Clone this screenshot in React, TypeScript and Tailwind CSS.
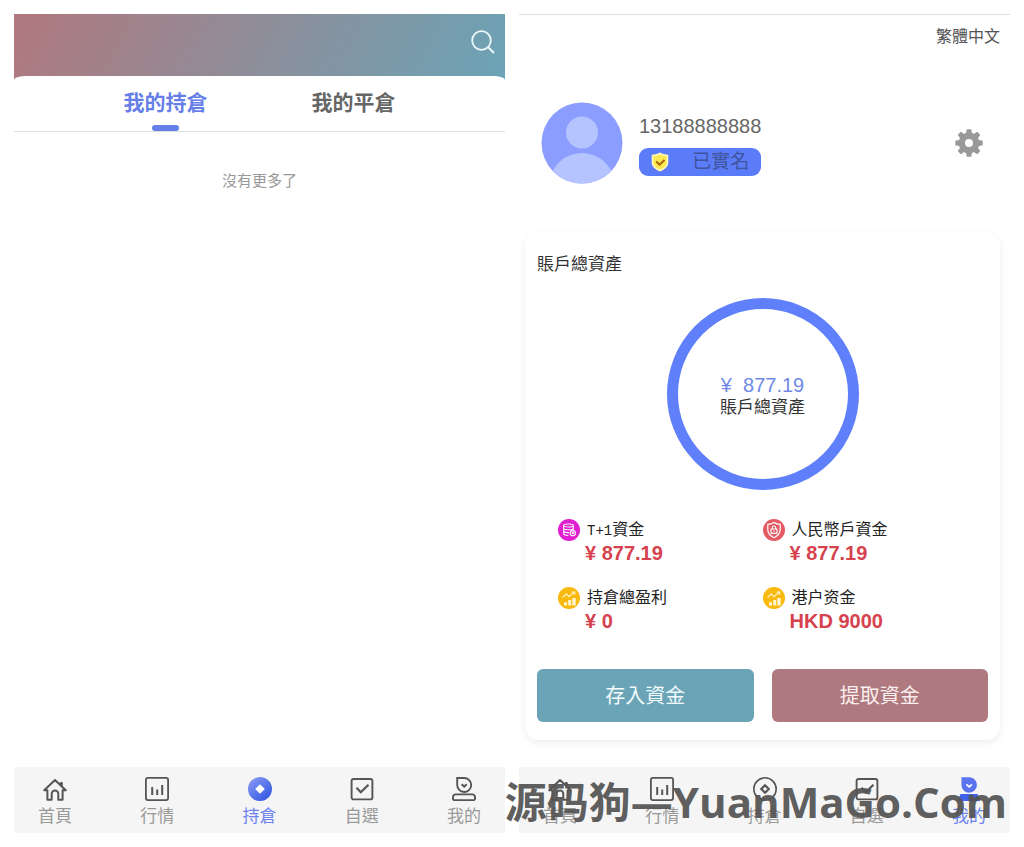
import React from "react";

type IconProps = { active?: boolean };

const INK = "#555";

function HomeIcon(_: IconProps) {
  return (
    <svg viewBox="0 0 24 24" className="size-6" fill="none" stroke={INK} strokeWidth="2" strokeLinejoin="round" strokeLinecap="round" aria-hidden="true">
      <path d="M1.200 13.200 12 3l10.800 10.200h-3.200v9.600h-4.300v-6.100a3.300 3.300 0 0 0-6.600 0v6.100H4.400v-9.600z" />
      <path d="M18.300 8V6.200" strokeWidth="3" />
    </svg>
  );
}

function ChartIcon(_: IconProps) {
  return (
    <svg viewBox="0 0 24 24" className="size-6" fill="none" stroke={INK} strokeWidth="1.800" aria-hidden="true">
      <rect x="0.900" y="0.900" width="22.200" height="22.200" rx="2" />
      <path d="M7.200 10v8M12.200 12.500V18M17.200 8v10" strokeWidth="2" />
    </svg>
  );
}

function HoldIcon({ active }: IconProps) {
  if (active) {
    return (
      <svg viewBox="0 0 24 24" className="size-6" aria-hidden="true">
        <defs>
          <linearGradient id="coin" x1="0.1" y1="0.2" x2="0.8" y2="1">
            <stop offset="0" stopColor="#7f92f5" />
            <stop offset="1" stopColor="#3358e0" />
          </linearGradient>
        </defs>
        <circle cx="12" cy="12" r="12" fill="url(#coin)" />
        <path d="m12 8.200 3.900 3.800-3.900 3.800L8.100 12z" fill="#fff" stroke="#fff" strokeWidth="1.400" strokeLinejoin="round" />
      </svg>
    );
  }
  return (
    <svg viewBox="0 0 24 24" className="size-6" fill="none" stroke={INK} aria-hidden="true">
      <circle cx="12" cy="12" r="11.200" strokeWidth="1.600" />
      <path d="m12 8.200 3.800 3.800-3.800 3.800L8.200 12z" strokeWidth="2.200" strokeLinejoin="round" />
    </svg>
  );
}

function PickIcon(_: IconProps) {
  return (
    <svg viewBox="0 0 24 24" className="size-6" fill="none" stroke={INK} aria-hidden="true">
      <rect x="1.600" y="2" width="20.800" height="20.400" rx="2" strokeWidth="1.900" />
      <path d="m6.500 10.800 4.300 4.400 7.700-7.400" strokeWidth="2.200" />
    </svg>
  );
}

function MeIcon({ active }: IconProps) {
  const head = "M5.200 1h7.400a7 7 0 1 1-7.400 7z";
  if (active) {
    return (
      <svg viewBox="0 0 24 24" className="size-6" aria-hidden="true">
        <path d={head} fill="#5a73ee" stroke="#5a73ee" strokeWidth="1.500" />
        <path d="m9.400 7.300 2.800 2.500L15 7.300" fill="none" stroke="#fff" strokeWidth="1.700" />
        <path d="M3.500 17h17l3 7H.500z" fill="#3f62e6" />
      </svg>
    );
  }
  return (
    <svg viewBox="0 0 24 24" className="size-6" fill="none" stroke={INK} strokeWidth="1.900" aria-hidden="true">
      <path d={head} />
      <path d="m9.600 7.300 2.600 2.300 2.600-2.300" strokeWidth="2" />
      <path d="M3.500 17.400h17q2.300 0 2.600 3.200.1 2.500-1.700 2.500H2.600q-1.800 0-1.700-2.500.3-3.200 2.600-3.200z" />
    </svg>
  );
}

const NAV = [
  { label: "首頁", Icon: HomeIcon },
  { label: "行情", Icon: ChartIcon },
  { label: "持倉", Icon: HoldIcon },
  { label: "自選", Icon: PickIcon },
  { label: "我的", Icon: MeIcon },
];

function BottomNav({ current }: { current: string }) {
  return (
    <nav className="flex justify-between bg-[#f5f5f5] px-6 pt-2.5 pb-1">
      {NAV.map(({ label, Icon }) => (
        <a
          key={label}
          href="#"
          aria-current={label === current ? "page" : undefined}
          className={`flex flex-col items-center gap-1 text-[17px] leading-6 ${label === current ? "text-[#6b82ef]" : "text-[#999]"}`}
        >
          <Icon active={label === current} />
          {label}
        </a>
      ))}
    </nav>
  );
}

function PositionsScreen() {
  return (
    <section className="flex min-w-0 flex-1 flex-col">
      <header className="bg-linear-[118deg,#ae7a80_4%,#6aa4b7_96%]">
        <div className="flex h-[62px] items-center justify-end px-2.5">
          <button type="button" aria-label="搜尋" className="-mt-1.5">
            <svg viewBox="0 0 24 24" className="size-6" fill="none" stroke="#eef8fb" strokeWidth="1.800" aria-hidden="true">
              <circle cx="10.500" cy="10.500" r="9.300" />
              <path d="m17 17 6 6" strokeWidth="2" />
            </svg>
          </button>
        </div>
        <div role="tablist" className="flex justify-center rounded-t-[12px_4px] border-b border-[#dcdfe1] bg-white">
          <button type="button" role="tab" aria-selected="true" className="flex w-[188px] flex-col items-center gap-[7px] pt-3 text-[21px] leading-[30px] font-bold text-[#667fe8]">
            我的持倉
            <span className="h-1.5 w-[27px] rounded-[3px] bg-[#667fe8]" />
          </button>
          <button type="button" role="tab" aria-selected="false" className="w-[188px] pt-3 pb-[13px] text-[21px] leading-[30px] font-bold text-[#666]">
            我的平倉
          </button>
        </div>
      </header>
      <p className="flex-1 pt-[37px] text-center text-[15px] leading-6 text-[#999]">沒有更多了</p>
      <BottomNav current="持倉" />
    </section>
  );
}

function FundsIcon() {
  return (
    <svg viewBox="0 0 22 22" className="size-[22px]" fill="none" stroke="#fff" strokeWidth="1.100" aria-hidden="true">
      <circle cx="11" cy="11" r="11" fill="#e01fd0" stroke="none" />
      <ellipse cx="10.500" cy="6.500" rx="4.800" ry="1.500" />
      <path d="M5.700 6.500v8.300c0 1 2 1.700 4.600 1.700M15.300 6.500v4.300M5.700 9.500c1 1.400 6 1.900 9.600.4M5.700 12.400c.8 1 3.200 1.400 5.500 1.200" />
      <circle cx="14.800" cy="14.200" r="2.600" />
      <circle cx="14.800" cy="14.200" r=".6" fill="#fff" />
    </svg>
  );
}

function ShieldFundsIcon() {
  return (
    <svg viewBox="0 0 22 22" className="size-[22px]" fill="none" stroke="#fff" strokeWidth="1.200" aria-hidden="true">
      <circle cx="11" cy="11" r="11" fill="#e45a62" stroke="none" />
      <path d="M11 3.500c2 1.500 4 1.900 6.200 1.900v5.200c0 4.200-3 6.700-6.200 8.100-3.200-1.400-6.200-3.900-6.200-8.100V5.400C7 5.400 9 5 11 3.500z" />
      <rect x="8" y="10" width="6" height="4.300" rx=".6" />
      <path d="M9.300 10V8.700a1.700 1.700 0 0 1 3.400 0V10M11 11.500v1.300" />
    </svg>
  );
}

function ProfitIcon() {
  return (
    <svg viewBox="0 0 22 22" className="size-[22px]" fill="none" stroke="#fff6d0" strokeWidth="1.100" aria-hidden="true">
      <circle cx="11" cy="11" r="11" fill="#f9b90f" stroke="none" />
      <path d="m4.500 10.500 4-3.500 2.500 2.700 5.500-5M13.700 5h3v3" />
      <path d="M6 18.500v-3.200h3v3.200zM10.200 18.500v-5.500h3v5.500zM14.300 18.500v-7.500h3.400v7.500z" fill="#fff6d0" stroke="none" />
    </svg>
  );
}

const STATS = [
  { prefix: "T+1", label: "資金", value: "¥ 877.19", Icon: FundsIcon },
  { prefix: "", label: "人民幣戶資金", value: "¥ 877.19", Icon: ShieldFundsIcon },
  { prefix: "", label: "持倉總盈利", value: "¥ 0", Icon: ProfitIcon },
  { prefix: "", label: "港户资金", value: "HKD 9000", Icon: ProfitIcon },
];

function GearIcon() {
  const teeth = [0, 45, 90, 135, 180, 225, 270, 315];
  return (
    <svg viewBox="-14 -14 28 28" className="size-7" fill="#999" aria-hidden="true">
      {teeth.map((a) => (
        <path key={a} d="M-3-9l.6-4.200q.2-.5.7-.5h3.400q.5 0 .7.500L3-9z" transform={`rotate(${a})`} />
      ))}
      <circle r="7.200" fill="none" stroke="#999" strokeWidth="6.400" />
    </svg>
  );
}

function AccountScreen() {
  return (
    <section className="flex min-w-0 flex-1 flex-col border-t border-[#dfdfdf]">
      <div className="flex justify-end px-2.5 pt-2.5">
        <button type="button" className="text-base leading-6 text-[#555]">繁體中文</button>
      </div>

      <div className="mt-[53px] flex items-center pr-[27px] pl-[22px]">
        <svg viewBox="0 0 82 82" className="size-[82px]" role="img" aria-label="頭像">
          <defs>
            <clipPath id="avatar">
              <circle cx="41" cy="41" r="40.500" />
            </clipPath>
          </defs>
          <g clipPath="url(#avatar)">
            <rect width="82" height="82" fill="#8b9eff" />
            <circle cx="41" cy="30.500" r="16" fill="#b5c4ff" />
            <circle cx="41" cy="84" r="33" fill="#b5c4ff" />
          </g>
        </svg>
        <div className="ml-4 flex flex-col gap-2.5 pt-1">
          <span className="text-xl leading-6 text-[#666]">13188888888</span>
          <span className="flex h-7 items-center justify-between rounded-[9px] bg-[#5b7cf9] px-3 text-[19px] leading-7 text-[#40549c]">
            <svg viewBox="0 0 18 20" className="h-5 w-[18px]" aria-hidden="true">
              <path d="M9 .500c2.500 1.500 5 2 8.300 2.300v8c0 4-4 7-8.300 8.700C4.700 17.800.7 14.800.7 10.800v-8C4 2.500 6.500 2 9 .500z" fill="#fff6b8" />
              <path d="M9 2.500c2 1.100 4.200 1.600 6.500 1.800v6.500c0 3-3 5.300-6.500 6.700-3.500-1.400-6.500-3.700-6.500-6.700V4.300C4.800 4.100 7 3.600 9 2.500z" fill="#fce94f" />
              <path d="m5.200 9.500 3.300 3.200 5-4.700" fill="none" stroke="#a8620c" strokeWidth="1.900" />
            </svg>
            已實名
          </span>
        </div>
        <button type="button" aria-label="設定" className="ml-auto">
          <GearIcon />
        </button>
      </div>

      <div className="mt-12 mr-2.5 ml-1.5 rounded-[14px] bg-white px-3 pt-[21px] pb-[18px] shadow-[0_3px_8px_rgba(0,0,0,0.07)]">
        <h2 className="text-[17px] leading-6 text-[#333]">賬戶總資產</h2>
        <div className="mx-auto mt-[21px] flex size-48 flex-col items-center justify-center rounded-full border-[11px] border-[#5f7ffb] pt-1">
          <span className="text-xl leading-6 whitespace-pre text-[#6e8ae6]">{"¥  877.19"}</span>
          <span className="text-[17px] leading-[22px] text-[#333]">賬戶總資產</span>
        </div>
        <dl className="mt-7 grid grid-cols-2 gap-y-[21px] px-[21px]">
          {STATS.map(({ prefix, label, value, Icon }) => (
            <div key={label}>
              <dt className="flex h-[23px] items-center text-base text-[#222]">
                <Icon />
                <span className="ml-[7px]">
                  {prefix && <span className="font-['Liberation_Mono',monospace] text-sm">{prefix}</span>}
                  {label}
                </span>
              </dt>
              <dd className="pl-[27px] text-xl leading-6 font-bold text-[#d6424e]">{value}</dd>
            </div>
          ))}
        </dl>
        <div className="mt-9 flex gap-[18px]">
          <button type="button" className="h-[53px] flex-1 rounded-md bg-[#6ba4b7] text-xl text-[#f2fafc]">存入資金</button>
          <button type="button" className="h-[53px] flex-1 rounded-md bg-[#ae7a7f] text-xl text-[#fbeeee]">提取資金</button>
        </div>
      </div>

      <div className="mt-auto">
        <BottomNav current="我的" />
      </div>
    </section>
  );
}

export default function App() {
  return (
    <main className="relative flex min-h-screen gap-[14px] bg-white p-[14px] font-['Liberation_Sans','Noto_Sans_CJK_TC',sans-serif]">
      <PositionsScreen />
      <AccountScreen />
      <div className="pointer-events-none absolute right-[17px] bottom-[17px] font-['Open_Sans','Noto_Sans_CJK_SC',sans-serif] text-[42px] leading-[56px] font-bold whitespace-nowrap text-[#555]/95">
        源码狗—YuanMaGo.Com
      </div>
    </main>
  );
}
